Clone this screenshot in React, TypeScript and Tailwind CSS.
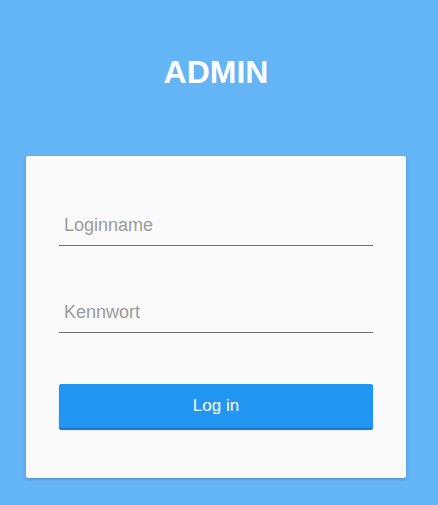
import React from 'react';

export default function App() {
  return (
    <div
      className="min-h-[505px] w-full bg-[#64b5f6]"
      style={{ fontFamily: '"Liberation Sans", Arial, sans-serif' }}
    >
      <div className="w-[432px] pt-[54px]">
        <h1 className="text-center text-[32px] font-bold leading-[36px] text-white">ADMIN</h1>

        <form
          className="mx-[26px] mt-[66px] rounded-[2px] bg-[#fafafa] px-[33px] pb-[50px] pt-[42px] shadow-[0_1px_3px_rgba(0,0,0,0.25)]"
          onSubmit={(e) => e.preventDefault()}
        >
          <input
            type="text"
            placeholder="Loginname"
            className="block h-[48px] w-full border-b border-[#6f6f6f] bg-transparent pl-[5px] pt-[7px] text-[18px] text-[#555] outline-none placeholder:text-[#9a9a9a]"
          />
          <input
            type="password"
            placeholder="Kennwort"
            className="mt-[39px] block h-[48px] w-full border-b border-[#6f6f6f] bg-transparent pl-[5px] pt-[7px] text-[18px] text-[#555] outline-none placeholder:text-[#9a9a9a]"
          />
          <button
            type="submit"
            className="mt-[51px] block h-[44px] w-full rounded-[2px] bg-[#2196f3] text-[17px] text-white shadow-[0_2px_1px_#1a6fc0]"
          >
            Log in
          </button>
        </form>
      </div>
    </div>
  );
}
